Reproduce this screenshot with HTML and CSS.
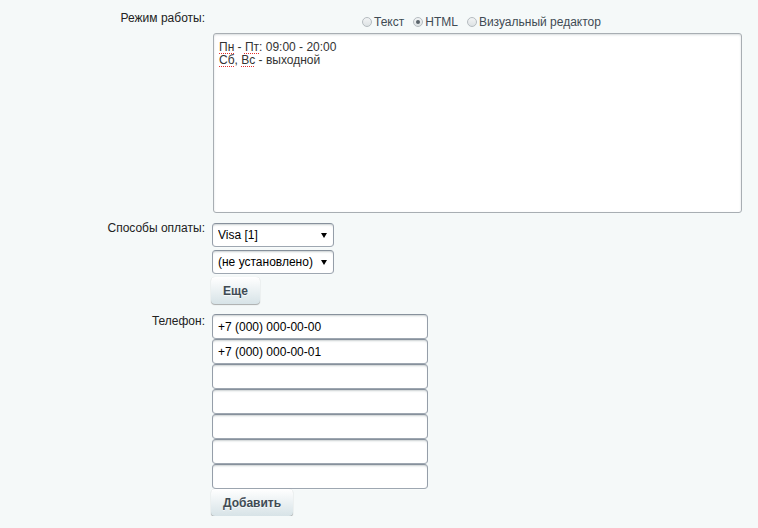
FILE: index.html
```html
<!DOCTYPE html>
<html lang="ru">
<head>
<meta charset="UTF-8">
<title>Настройки магазина</title>
<link rel="stylesheet" href="styles.css">
</head>
<body>

<div class="form">
    <div class="label">Режим работы:</div>
    <div class="field">
        <div class="editor-modes">
            <label><input type="radio" name="mode"> Текст</label>
            <label><input type="radio" name="mode" checked> HTML</label>
            <label><input type="radio" name="mode"> Визуальный редактор</label>
        </div>
        <div class="textarea" contenteditable="true"><span class="typo">Пн</span> - <span class="typo">Пт</span>: 09:00 - 20:00<br><span class="typo">Сб</span>, <span class="typo">Вс</span> - выходной</div>
    </div>

    <div class="label label-pay">Способы оплаты:</div>
    <div class="field stack">
        <div class="select-wrap">
            <select><option>Visa [1]</option></select>
        </div>
        <div class="select-wrap">
            <select><option>(не установлено)</option></select>
        </div>
        <button class="btn">Еще</button>
    </div>

    <div class="label">Телефон:</div>
    <div class="field stack phones">
        <input type="text" value="+7 (000) 000-00-00">
        <input type="text" value="+7 (000) 000-00-01">
        <input type="text">
        <input type="text">
        <input type="text">
        <input type="text">
        <input type="text">
        <button class="btn">Добавить</button>
    </div>
</div>

</body>
</html>
```

FILE: styles.css
```css
body {
    margin: 0;
    background-color: #f5f9f9;
    font-family: "Liberation Sans", Arial, sans-serif;
    font-size: 12px;
    color: #000;
}
.form {
    display: grid;
    grid-template-columns: 205px 1fr;
    column-gap: 7px;
    row-gap: 10px;
    padding-top: 11px;
}
.label {
    text-align: right;
    color: #222;
}
.label-pay {
    margin-top: -2px;
}
.field {
    min-width: 0;
}
.stack {
    display: flex;
    flex-direction: column;
    align-items: flex-start;
    gap: 3px;
}
.phones {
    gap: 0;
}

/* editor mode switch */
.editor-modes {
    display: flex;
    gap: 9px;
    padding-left: 150px;
    height: 22px;
    align-items: center;
    font-size: 12px;
    color: #3f4b54;
}
.editor-modes label {
    display: flex;
    align-items: center;
    gap: 2px;
}
input[type="radio"] {
    appearance: none;
    width: 10px;
    height: 10px;
    margin: 0;
    border: 1px solid #b5bcc0;
    border-radius: 50%;
    background: linear-gradient(#f2f4f5, #dde2e4);
    position: relative;
}
input[type="radio"]:checked::after {
    content: "";
    position: absolute;
    left: 2px;
    top: 2px;
    width: 4px;
    height: 4px;
    border-radius: 50%;
    background: #59636a;
}

.textarea {
    width: 529px;
    height: 180px;
    box-sizing: border-box;
    margin-left: 1px;
    padding: 7px 5px;
    background: #fff;
    border: 1px solid #a8aeb3;
    border-radius: 3px;
    box-shadow: inset 0 1px 2px rgba(180, 188, 191, 0.5);
    line-height: 13px;
    color: #333;
    outline: none;
}
.typo {
    text-decoration: underline dotted #e0312f;
    text-decoration-thickness: 1px;
    text-underline-offset: 2px;
}

/* inputs and selects */
input[type="text"], select {
    box-sizing: border-box;
    height: 25px;
    margin: 0;
    padding: 0 5px;
    font-family: inherit;
    font-size: 12px;
    color: #000;
    background: #fff;
    border: 1px solid;
    border-color: #87919c #959ea9 #9ea7b1 #959ea9;
    border-radius: 4px;
    box-shadow: 0 1px 0 0 rgba(255, 255, 255, 0.3), inset 0 2px 2px -1px rgba(180, 188, 191, 0.7);
    outline: none;
}
input[type="text"] {
    width: 216px;
}
.select-wrap {
    position: relative;
}
.select-wrap select {
    appearance: none;
    width: 122px;
    height: 24px;
    padding-right: 16px;
}
.select-wrap::after {
    content: "";
    position: absolute;
    right: 7px;
    top: 10px;
    border-left: 3px solid transparent;
    border-right: 3px solid transparent;
    border-top: 5px solid #000;
    pointer-events: none;
}

.btn {
    height: 27px;
    margin: 0 0 0 -1px;
    padding: 0 12px;
    font-family: inherit;
    font-size: 12px;
    font-weight: bold;
    color: #3f4b54;
    text-shadow: 0 1px rgba(255, 255, 255, 0.7);
    border: none;
    border-radius: 4px;
    background-color: #e0e9ec;
    background-image: linear-gradient(to top, #d7e3e7, #fff);
    box-shadow: 0 0 1px rgba(0, 0, 0, 0.11), 0 1px 1px rgba(0, 0, 0, 0.3), inset 0 1px #fff;
    cursor: pointer;
}
```
